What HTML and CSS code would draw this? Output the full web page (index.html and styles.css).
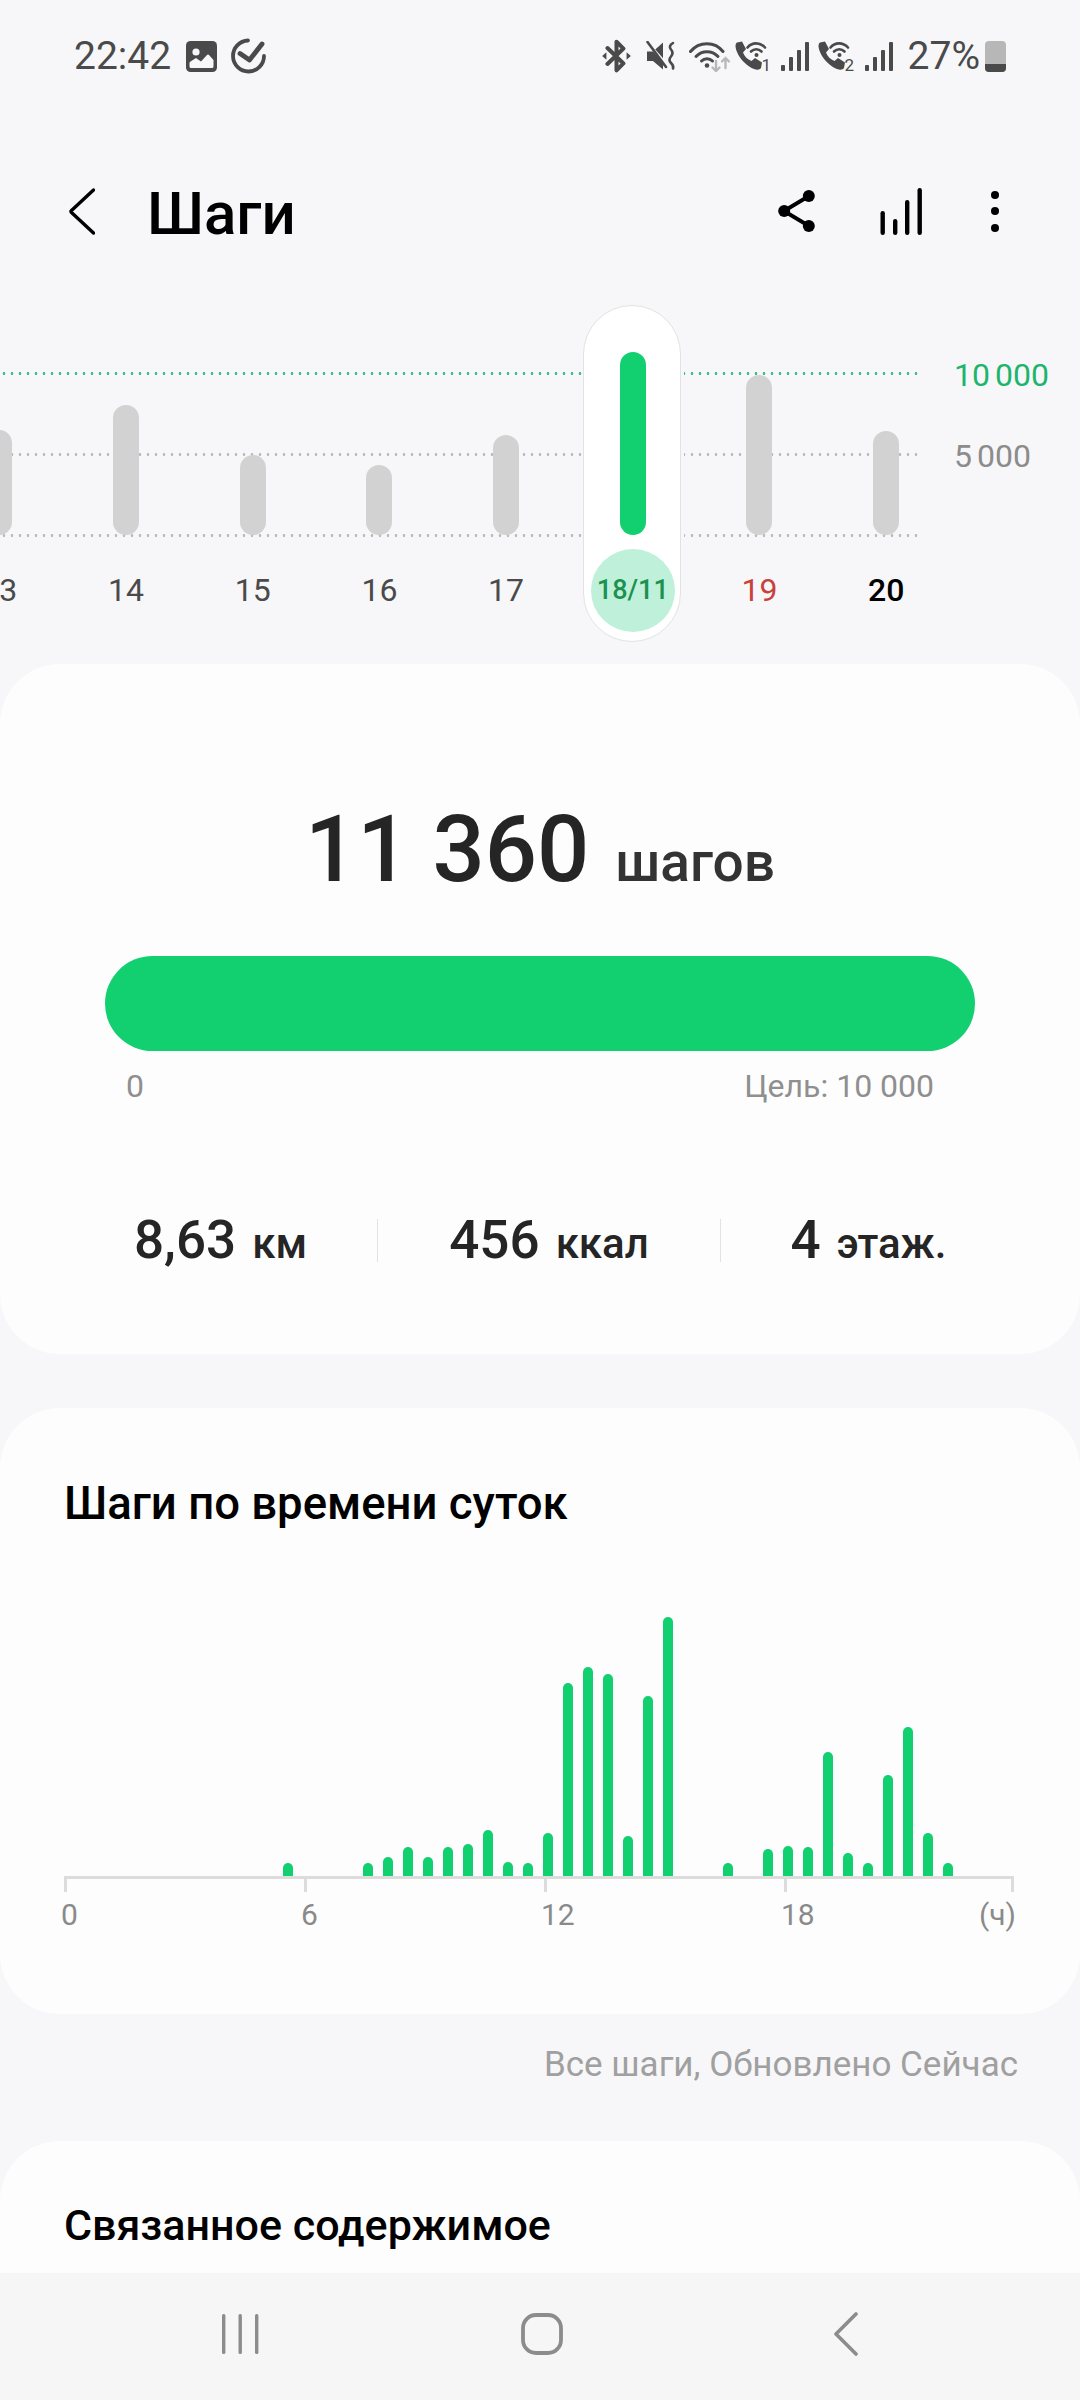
FILE: index.html
```html
<!DOCTYPE html>
<html lang="ru">
<head>
    <meta charset="UTF-8">
    <meta name="viewport" content="width=device-width, initial-scale=1.0">
    <title>Шаги</title>
    <link rel="stylesheet" href="styles.css">
</head>
<body>
    <div class="screen">
        <div class="content">
            <!-- Строка состояния -->
            <div class="status-bar">
                <div class="status-left">
                    <span class="time">22:42</span>
                    <svg class="ic-image" width="31" height="31" viewBox="0 0 31 31">
                        <rect width="31" height="31" rx="4.5" fill="#4a4a4a"/>
                        <circle cx="10" cy="11" r="3.6" fill="#f7f7f9"/>
                        <path d="M3.500 25.500V22q0-1 1-1.600L10 17l5 3.500 6-6.500q1-1 2 0l4.500 5v6.500q0 1.500-1.500 1.500H5q-1.500 0-1.500-1.500z" fill="#f7f7f9"/>
                    </svg>
                    <svg class="ic-check" width="37" height="36" viewBox="0 0 37 36" fill="none" stroke="#4a4a4a" stroke-linecap="round" stroke-linejoin="round">
                        <path d="M18 2.500A15.500 15.500 0 1 0 34 18" stroke-width="3.800"/>
                        <path d="M10 15.500L19.500 22L32 6" stroke-width="4.800"/>
                    </svg>
                </div>
                <div class="status-right">
                    <svg class="ic-bt" width="29" height="34" viewBox="0 0 27 32">
                        <path d="M5 8.500L20 23L13.500 29.500V2.500L20 9L5 23.500" fill="none" stroke="#4a4a4a" stroke-width="3.800" stroke-linejoin="round" stroke-linecap="round"/>
                        <path d="M0 16l4-3.500v7zM27 16l-4-3.500v7z" fill="#4a4a4a"/>
                    </svg>
                    <svg class="ic-mute" width="30" height="30" viewBox="0 0 30 30">
                        <path d="M1 10.500h6L17 1.500v27L7 20H1z" fill="#4a4a4a"/>
                        <path d="M2 2.500L21 24" stroke="#f7f7f9" stroke-width="3"/>
                        <path d="M1.500 1L20 26" stroke="#4a4a4a" stroke-width="2.600" stroke-linecap="round"/>
                        <path d="M27 2q-5 3-2 6.500t0 7q-3 3.500 0 6.500t2 5.500" fill="none" stroke="#4a4a4a" stroke-width="2.600" stroke-linecap="round"/>
                    </svg>
                    <svg class="ic-wifi" width="42" height="32" viewBox="0 0 42 32" fill="none" stroke-linecap="round">
                        <path d="M1.500 11.500C10 1 26 1 34 11.500" stroke="#4a4a4a" stroke-width="3"/>
                        <path d="M7 16.500C13 10 23 10 29 16.500" stroke="#4a4a4a" stroke-width="3"/>
                        <path d="M12.500 21C15.500 18 20.500 18 23.500 21" stroke="#4a4a4a" stroke-width="3"/>
                        <circle cx="18" cy="25.500" r="2.300" fill="#4a4a4a"/>
                        <path d="M27 21v10M23.500 27.500L27 31l3.500-3.500" stroke="#b8b8b8" stroke-width="2.400"/>
                        <path d="M36.500 28V18M33 21.500l3.500-3.500 3.500 3.500" stroke="#b8b8b8" stroke-width="2.400"/>
                    </svg>
                    <svg class="ic-call" width="36" height="36" viewBox="0 0 36 36">
                        <path d="M2 1.500l5-1 4 7.500-3 3.500c1.500 4 4.500 7 8.500 8.500l3.500-3 7 4.500-1 5.500c-1 1.500-3 2-5 1.500C11 26 1 14 0.500 5c0-1.500.5-3 1.500-3.500z" fill="#4a4a4a"/>
                        <path d="M12.500 6.500C17 1 25 1 30 6.500M16 10.500C19 7.500 23.500 7.500 26.500 10.500" fill="none" stroke="#4a4a4a" stroke-width="2.600" stroke-linecap="round"/>
                        <circle cx="21.500" cy="14" r="2" fill="#4a4a4a"/>
                        <text x="26.500" y="29.500" class="sim-num">1</text>
                    </svg>
                    <svg class="ic-signal" width="28" height="29" viewBox="0 0 28 29" fill="#4a4a4a">
                        <rect x="0" y="23" width="4" height="6" rx="1"/>
                        <rect x="8" y="15" width="4" height="14" rx="1"/>
                        <rect x="16" y="8" width="4" height="21" rx="1"/>
                        <rect x="24" y="0" width="4" height="29" rx="1"/>
                    </svg>
                    <svg class="ic-call ic-call2" width="37" height="36" viewBox="0 0 37 36">
                        <path d="M2 1.500l5-1 4 7.500-3 3.500c1.500 4 4.500 7 8.500 8.500l3.500-3 7 4.500-1 5.500c-1 1.500-3 2-5 1.500C11 26 1 14 0.500 5c0-1.500.5-3 1.500-3.500z" fill="#4a4a4a"/>
                        <path d="M12.500 6.500C17 1 25 1 30 6.500M16 10.500C19 7.500 23.500 7.500 26.500 10.500" fill="none" stroke="#4a4a4a" stroke-width="2.600" stroke-linecap="round"/>
                        <circle cx="21.500" cy="14" r="2" fill="#4a4a4a"/>
                        <text x="26.500" y="29.500" class="sim-num">2</text>
                    </svg>
                    <svg class="ic-signal" width="28" height="29" viewBox="0 0 28 29" fill="#4a4a4a">
                        <rect x="0" y="23" width="4" height="6" rx="1"/>
                        <rect x="8" y="15" width="4" height="14" rx="1"/>
                        <rect x="16" y="8" width="4" height="21" rx="1"/>
                        <rect x="24" y="0" width="4" height="29" rx="1"/>
                    </svg>
                    <span class="battery-text">27%</span>
                    <div class="battery"><div class="battery-level"></div></div>
                </div>
            </div>

            <!-- Заголовок -->
            <div class="app-header">
                <svg class="ic-back" width="26" height="47" viewBox="0 0 26 47" fill="none" stroke="#000" stroke-width="3.400" stroke-linecap="round" stroke-linejoin="round">
                    <path d="M24.500 2L2.500 22.500Q1.500 23.500 2.500 24.500L24.500 45"/>
                </svg>
                <h1 class="title">Шаги</h1>
                <div class="header-actions">
                    <svg class="ic-share" width="37" height="42" viewBox="0 0 37 42">
                        <path d="M6 21L31 6M6 21L31 36" stroke="#000" stroke-width="3.800"/>
                        <circle cx="6.200" cy="21" r="6" fill="#000"/>
                        <circle cx="30.800" cy="6" r="6" fill="#000"/>
                        <circle cx="30.800" cy="36" r="6" fill="#000"/>
                    </svg>
                    <svg class="ic-stats" width="43" height="47" viewBox="0 0 43 47" fill="#000">
                        <rect x="0.500" y="23" width="4.400" height="24" rx="2.200"/>
                        <rect x="13" y="31" width="4.400" height="16" rx="2.200"/>
                        <rect x="25" y="12" width="4.400" height="35" rx="2.200"/>
                        <rect x="37.500" y="0" width="4.400" height="47" rx="2.200"/>
                    </svg>
                    <div class="ic-more"><i></i><i></i><i></i></div>
                </div>
            </div>

            <!-- График по дням -->
            <div class="week-chart">
                <div class="grid-line grid-goal"></div>
                <div class="grid-line grid-mid"></div>
                <div class="grid-line grid-zero"></div>
                <span class="scale-label scale-goal">10 000</span>
                <span class="scale-label scale-mid">5 000</span>
                <div class="days">
                    <div class="day"><div class="day-plot"><div class="day-bar" style="height:105px"></div></div><span class="day-label">13</span></div>
                    <div class="day"><div class="day-plot"><div class="day-bar" style="height:130px"></div></div><span class="day-label">14</span></div>
                    <div class="day"><div class="day-plot"><div class="day-bar" style="height:80px"></div></div><span class="day-label">15</span></div>
                    <div class="day"><div class="day-plot"><div class="day-bar" style="height:70px"></div></div><span class="day-label">16</span></div>
                    <div class="day"><div class="day-plot"><div class="day-bar" style="height:100px"></div></div><span class="day-label">17</span></div>
                    <div class="day day-selected">
                        <div class="day-pill"></div>
                        <div class="day-plot"><div class="day-bar" style="height:183px"></div></div>
                        <span class="day-label">18/11</span>
                    </div>
                    <div class="day"><div class="day-plot"><div class="day-bar" style="height:160px"></div></div><span class="day-label label-sat">19</span></div>
                    <div class="day"><div class="day-plot"><div class="day-bar" style="height:104px"></div></div><span class="day-label label-today">20</span></div>
                </div>
            </div>

            <!-- Итог за день -->
            <section class="card card-summary">
                <div class="total">
                    <span class="total-num">11 360</span>
                    <span class="total-unit">шагов</span>
                </div>
                <div class="progress"></div>
                <div class="progress-labels">
                    <span>0</span>
                    <span>Цель: 10 000</span>
                </div>
                <div class="stats">
                    <div class="stat"><b>8,63</b><span>км</span></div>
                    <div class="stat"><b>456</b><span>ккал</span></div>
                    <div class="stat"><b>4</b><span>этаж.</span></div>
                </div>
            </section>

            <!-- Шаги по часам -->
            <section class="card card-hours">
                <h2 class="card-title">Шаги по времени суток</h2>
                <div class="hours">
                    <i></i><i></i><i></i><i></i><i></i><i></i><i></i><i></i><i></i><i></i><i></i>
                    <i style="height:13px"></i>
                    <i></i><i></i><i></i>
                    <i style="height:13px"></i>
                    <i style="height:19px"></i>
                    <i style="height:29px"></i>
                    <i style="height:19px"></i>
                    <i style="height:29px"></i>
                    <i style="height:32px"></i>
                    <i style="height:46px"></i>
                    <i style="height:14px"></i>
                    <i style="height:13px"></i>
                    <i style="height:43px"></i>
                    <i style="height:193px"></i>
                    <i style="height:209px"></i>
                    <i style="height:202px"></i>
                    <i style="height:40px"></i>
                    <i style="height:180px"></i>
                    <i style="height:259px"></i>
                    <i></i><i></i>
                    <i style="height:13px"></i>
                    <i></i>
                    <i style="height:27px"></i>
                    <i style="height:30px"></i>
                    <i style="height:29px"></i>
                    <i style="height:124px"></i>
                    <i style="height:23px"></i>
                    <i style="height:13px"></i>
                    <i style="height:101px"></i>
                    <i style="height:149px"></i>
                    <i style="height:43px"></i>
                    <i style="height:13px"></i>
                    <i></i><i></i><i></i>
                </div>
                <div class="axis">
                    <div class="tick"><i></i><span>0</span></div>
                    <div class="tick"><i></i><span>6</span></div>
                    <div class="tick"><i></i><span>12</span></div>
                    <div class="tick"><i></i><span>18</span></div>
                    <div class="tick tick-end"><i></i><span>(ч)</span></div>
                </div>
            </section>

            <p class="updated">Все шаги, Обновлено Сейчас</p>

            <section class="card card-related">
                <h2 class="card-title card-title-small">Связанное содержимое</h2>
            </section>
        </div>

        <!-- Навигация -->
        <nav class="nav-bar">
            <svg width="38" height="42" viewBox="0 0 38 42" fill="#8c8c8c">
                <rect x="1" y="1" width="3.400" height="40" rx="1.500"/>
                <rect x="17.500" y="1" width="3.400" height="40" rx="1.500"/>
                <rect x="34" y="1" width="3.400" height="40" rx="1.500"/>
            </svg>
            <svg class="nav-home" width="42" height="42" viewBox="0 0 42 42" fill="none" stroke="#8c8c8c" stroke-width="3.800">
                <rect x="2" y="2" width="38" height="38" rx="13"/>
            </svg>
            <svg width="24" height="44" viewBox="0 0 24 44" fill="none" stroke="#8c8c8c" stroke-width="3.600" stroke-linecap="round" stroke-linejoin="round">
                <path d="M22 2L2 22L22 42"/>
            </svg>
        </nav>
    </div>
</body>
</html>
```

FILE: styles.css
```css
* {
    margin: 0;
    padding: 0;
    box-sizing: border-box;
    font-family: Roboto, "Noto Sans", sans-serif;
}

body {
    width: 1080px;
    height: 2400px;
    overflow: hidden;
    background-color: #f7f7f9;
}

.screen {
    height: 2400px;
    display: flex;
    flex-direction: column;
}

.content {
    flex: 1;
    overflow: hidden;
}

/* status bar */
.status-bar {
    height: 112px;
    display: flex;
    justify-content: space-between;
    align-items: center;
    padding: 0 74px 0 74px;
    color: #4a4a4a;
}

.status-left,
.status-right {
    display: flex;
    align-items: center;
}

.time {
    font-size: 39px;
    line-height: 40px;
}

.ic-image {
    margin-left: 15px;
}

.ic-check {
    margin-left: 13px;
}

.ic-mute {
    margin-left: 15px;
}

.ic-wifi {
    margin-left: 13px;
}

.ic-call {
    margin-left: 4px;
    margin-top: 6px;
}

.ic-signal {
    margin-left: 10px;
}

.ic-call2 {
    margin-left: 9px;
}

.sim-num {
    font-size: 17px;
    fill: #4a4a4a;
}

.battery-text {
    margin-left: 15px;
    font-size: 39px;
    line-height: 40px;
}

.battery {
    margin-left: 5px;
    width: 21px;
    height: 31px;
    border-radius: 4px;
    background-color: #b7b7b7;
    display: flex;
    align-items: flex-end;
    overflow: hidden;
}

.battery-level {
    width: 100%;
    height: 8px;
    background-color: #4a4a4a;
}

/* header */
.app-header {
    height: 193px;
    padding: 5px 0 0 69px;
    display: flex;
    align-items: center;
}

.title {
    margin: 6px 0 0 52px;
    font-size: 60px;
    font-weight: 500;
    line-height: 70px;
    color: #000;
}

.header-actions {
    margin-left: auto;
    padding-right: 81px;
    display: flex;
    align-items: center;
}

.ic-stats {
    margin-left: 65px;
}

.ic-more {
    margin-left: 68px;
    display: flex;
    flex-direction: column;
    gap: 8.500px;
}

.ic-more i {
    display: block;
    width: 8px;
    height: 8px;
    border-radius: 50%;
    background-color: #000;
}

/* week chart */
.week-chart {
    position: relative;
    height: 359px;
}

.grid-line {
    position: absolute;
    left: 0;
    width: 922px;
    height: 3px;
    background-image: radial-gradient(circle, #bdbdbd 1.200px, transparent 1.600px);
    background-size: 8px 3px;
}

.grid-goal {
    top: 67px;
    background-image: radial-gradient(circle, #3cbf8c 1.200px, transparent 1.600px);
}

.grid-mid {
    top: 148px;
}

.grid-zero {
    top: 229px;
}

.scale-label {
    position: absolute;
    left: 954px;
    font-size: 32px;
    line-height: 40px;
    word-spacing: -3px;
}

.scale-goal {
    top: 50px;
    color: #1db56c;
}

.scale-mid {
    top: 131px;
    color: #8c8c8c;
}

.days {
    position: relative;
    display: flex;
    margin-left: -64px;
}

.day {
    position: relative;
    width: 126.700px;
    flex-shrink: 0;
    display: flex;
    flex-direction: column;
    align-items: center;
}

.day-plot {
    position: relative;
    height: 230px;
    display: flex;
    align-items: flex-end;
}

.day-bar {
    width: 26px;
    border-radius: 13px;
    background-color: #d2d2d2;
}

.day-label {
    margin-top: 35px;
    font-size: 32px;
    line-height: 40px;
    color: #4a4a4a;
}

.label-sat {
    color: #c9423a;
}

.label-today {
    color: #000;
    font-weight: 500;
}

.day-pill {
    position: absolute;
    top: 0;
    left: 14px;
    width: 98px;
    height: 337px;
    background-color: #fff;
    border: 1px solid #e2e2e2;
    border-radius: 49px;
    box-shadow: 3px 0 0 #f7f7f9;
}

.day-selected .day-bar {
    background-color: #12d070;
}

.day-selected .day-label {
    position: relative;
    width: 84px;
    height: 83px;
    margin-top: 14px;
    border-radius: 50%;
    background-color: #bff0da;
    color: #1c9150;
    font-size: 27px;
    font-weight: 500;
    line-height: 83px;
    text-align: center;
}

/* cards */
.card {
    background-color: #fdfdfe;
    border-radius: 60px;
}

.card-summary {
    height: 690px;
    padding-top: 131px;
}

.total {
    display: flex;
    justify-content: center;
    align-items: baseline;
    gap: 26px;
    line-height: 110px;
}

.total-num {
    font-size: 92px;
    font-weight: 500;
    color: #252525;
}

.total-unit {
    font-size: 55px;
    font-weight: 500;
    color: #333;
}

.progress {
    height: 95px;
    margin: 39px 105px 0;
    border-radius: 48px;
    background-color: #12d070;
}

.progress-labels {
    margin-top: 15px;
    padding: 0 146px 0 126px;
    display: flex;
    justify-content: space-between;
    font-size: 32px;
    line-height: 40px;
    color: #8f8f8f;
}

.stats {
    margin-top: 113px;
    padding: 0 64px;
    display: grid;
    grid-template-columns: 313px 343px 1fr;
}

.stat {
    height: 43px;
    display: flex;
    justify-content: center;
    align-items: baseline;
    gap: 16px;
    line-height: 43px;
    color: #252525;
}

.stat + .stat {
    border-left: 1px solid #e2e2e2;
}

.stat b {
    font-size: 53px;
    font-weight: 500;
}

.stat span {
    font-size: 42px;
    font-weight: 500;
}

.card-hours {
    margin-top: 54px;
    height: 606px;
    padding-top: 68px;
}

.card-title {
    padding-left: 64px;
    font-size: 45.500px;
    font-weight: 500;
    line-height: 56px;
    color: #000;
}

.card-title-small {
    font-size: 43px;
}

.hours {
    height: 270px;
    margin: 74px 0 0 58px;
    display: grid;
    grid-template-columns: repeat(48, 20px);
    align-items: end;
}

.hours i {
    display: block;
    justify-self: center;
    width: 10px;
    border-radius: 5px 5px 0 0;
    background-color: #12d070;
}

.axis {
    width: 950px;
    margin-left: 64px;
    border-top: 3px solid #dcdcdc;
    display: grid;
    grid-template-columns: 240px 240px 240px 195px 35px;
    font-size: 30px;
    line-height: 36px;
    color: #8a8a8a;
}

.tick i {
    display: block;
    width: 3px;
    height: 13px;
    background-color: #dcdcdc;
}

.tick span {
    display: block;
    margin: 5px 0 0 -3px;
    white-space: nowrap;
}

.tick-end {
    display: flex;
    flex-direction: column;
    align-items: flex-end;
}

.tick-end span {
    margin: 5px -2px 0 0;
}

.updated {
    margin-top: 31px;
    padding-right: 62px;
    text-align: right;
    font-size: 35px;
    line-height: 40px;
    color: #a0a0a0;
}

.card-related {
    margin-top: 56px;
    height: 300px;
    padding-top: 56px;
}

/* bottom nav */
.nav-bar {
    height: 127px;
    flex-shrink: 0;
    display: flex;
    gap: 262px;
    align-items: center;
    padding: 0 0 6px 221px;
    background-color: #f6f6f6;
}

.nav-home {
    margin-right: 9px;
}
```
